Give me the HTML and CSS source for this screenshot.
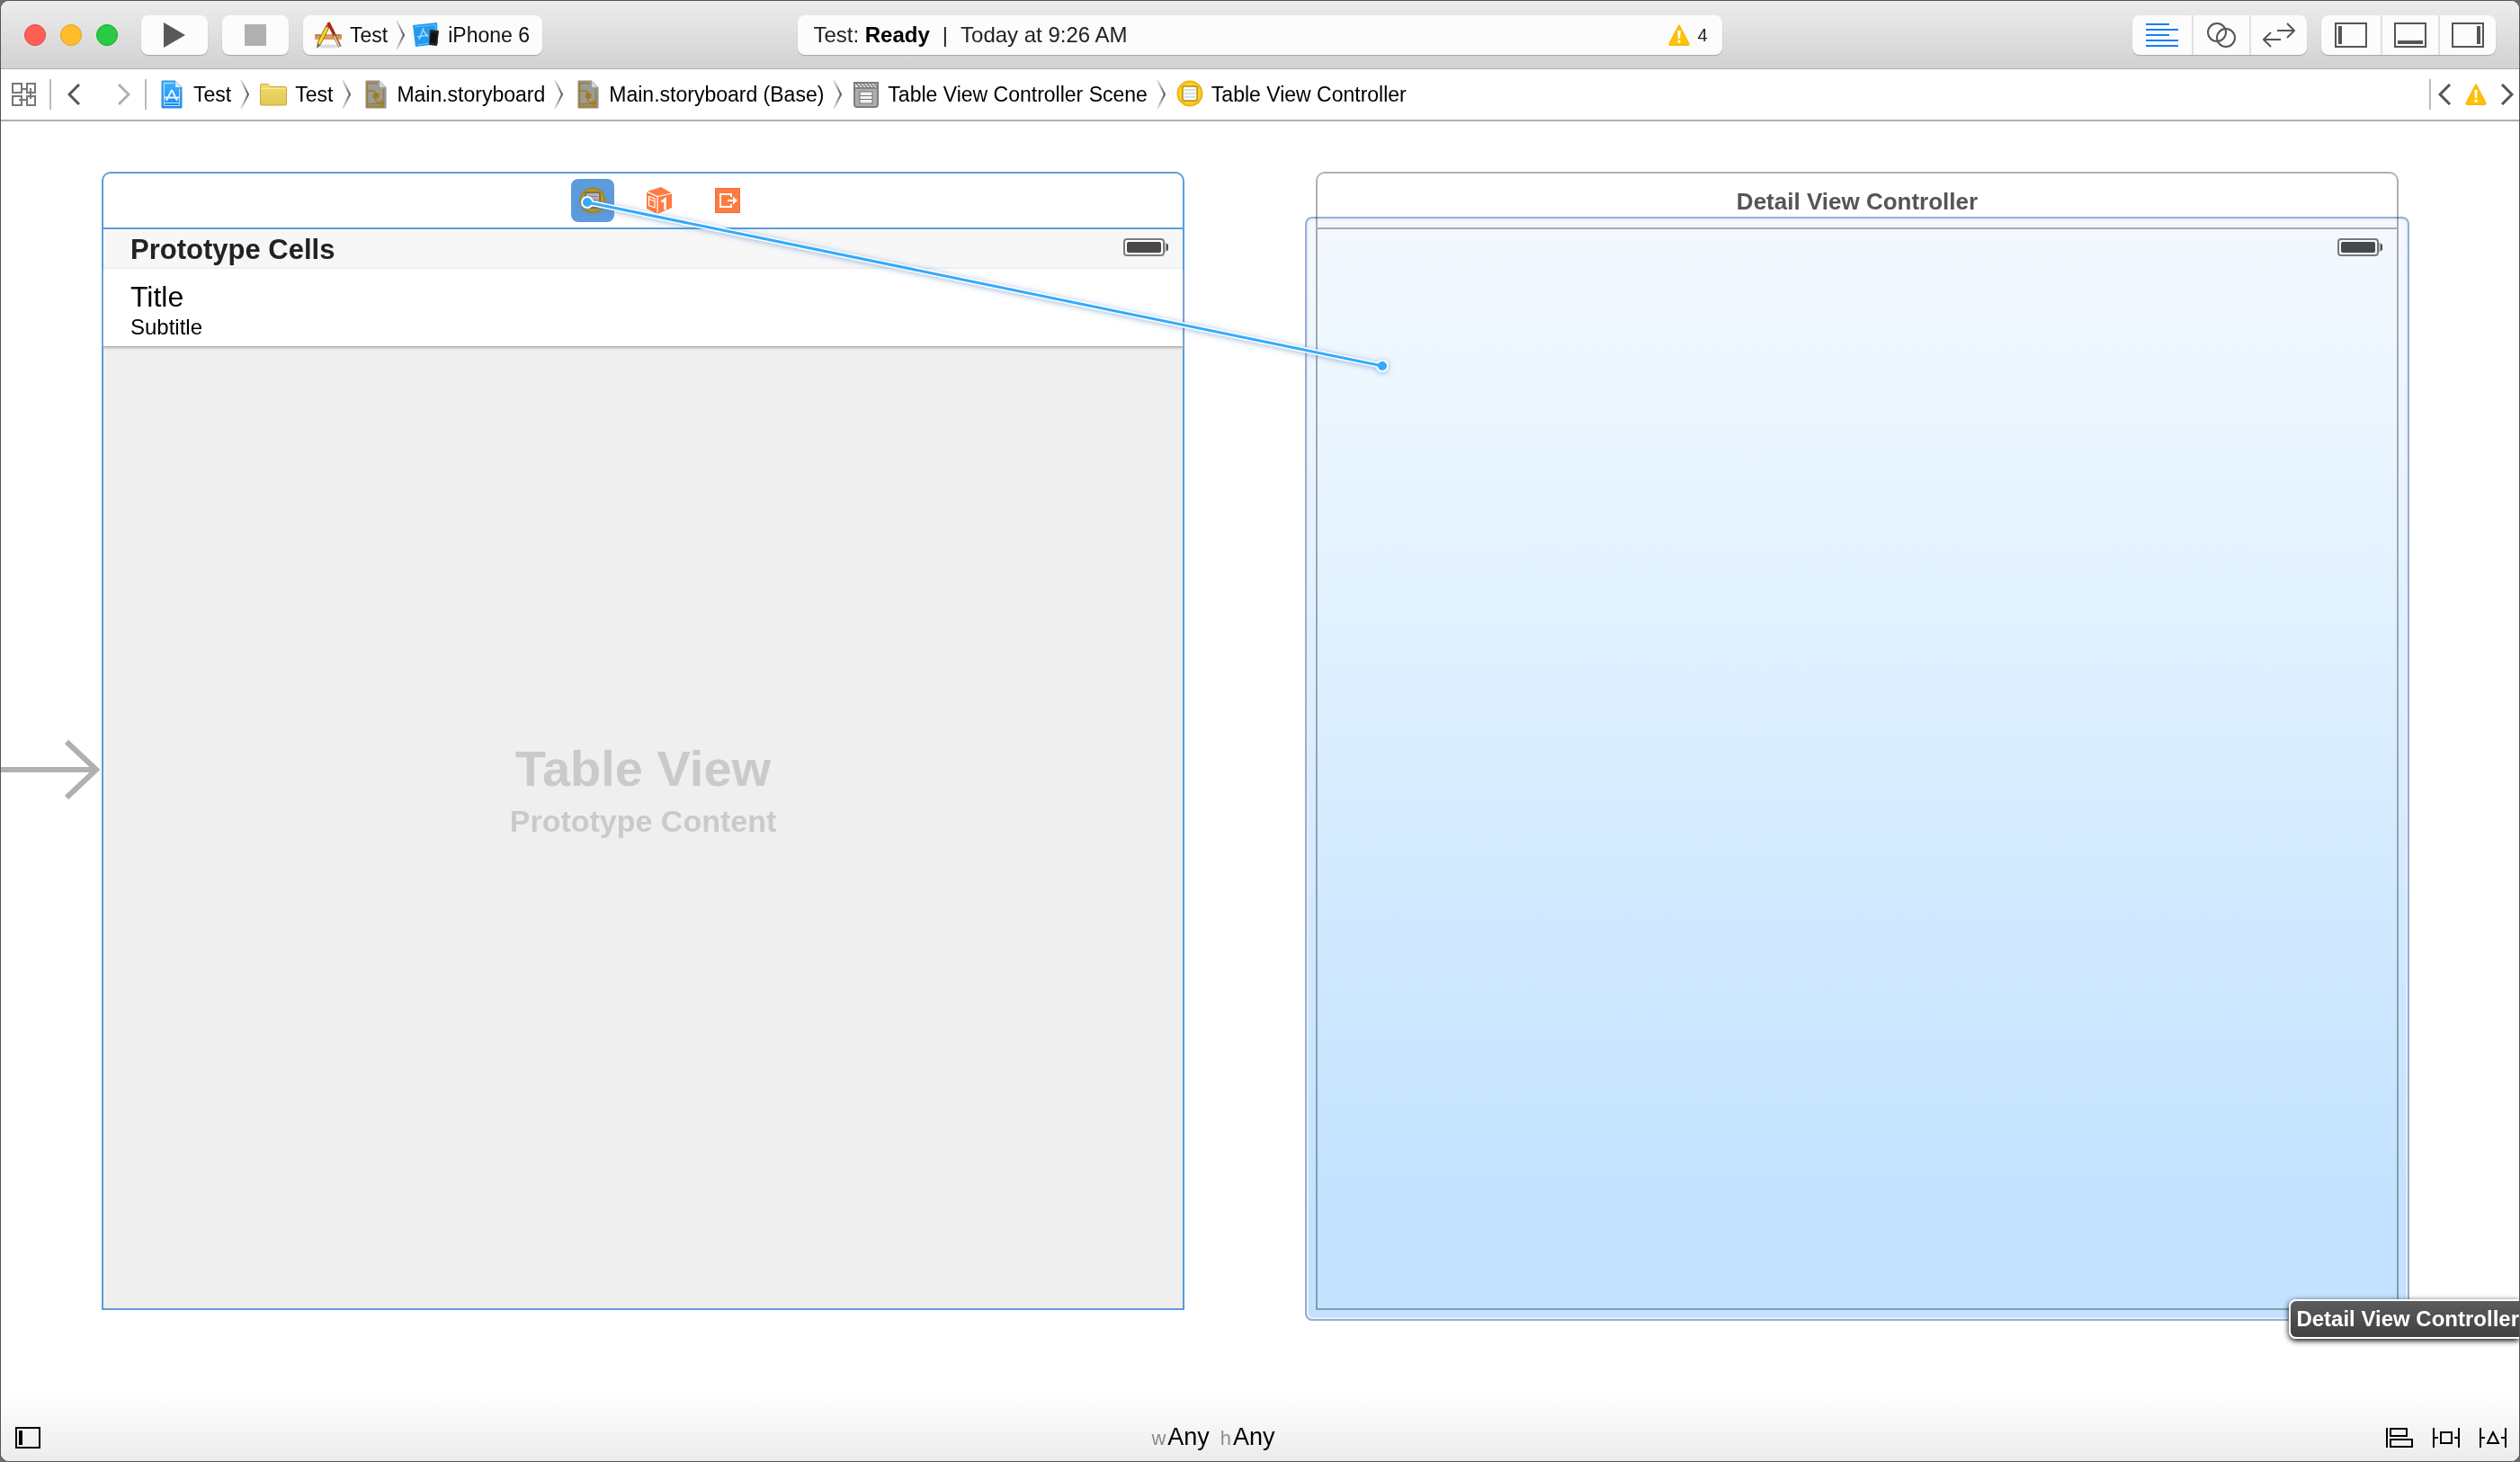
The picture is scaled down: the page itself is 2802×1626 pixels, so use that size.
FILE: index.html
```html
<!DOCTYPE html>
<html lang="en">
<head>
<meta charset="utf-8">
<title>Test — Main.storyboard</title>
<link rel="stylesheet" href="styles.css">
</head>
<body>
<svg class="defs" aria-hidden="true">
  <defs>
    <linearGradient id="fade" x1="0" y1="0" x2="0" y2="1">
      <stop offset="0" stop-color="#666" stop-opacity=".15"/><stop offset=".5" stop-color="#555"/><stop offset="1" stop-color="#666" stop-opacity=".15"/>
    </linearGradient>
    <linearGradient id="blue" x1="0" y1="0" x2="0" y2="1"><stop offset="0" stop-color="#3fb4f8"/><stop offset="1" stop-color="#1a86f7"/></linearGradient>
    <linearGradient id="manila" x1="0" y1="0" x2="0" y2="1"><stop offset="0" stop-color="#f0dc6e"/><stop offset="1" stop-color="#e2c653"/></linearGradient>
    <symbol id="sep" viewBox="0 0 10 34"><path d="M1 1L9 17L1 33" fill="none" stroke="url(#fade)" stroke-width="2"/></symbol>
    <symbol id="warn" viewBox="0 0 24 24"><path d="M12 1.500L22.500 21.500Q23 23 21.500 23H2.500Q1 23 1.500 21.500Z" fill="#ffc400" stroke="#fdb813" stroke-width="2" stroke-linejoin="round"/><path d="M10.200 7h3.600l-.8 9h-2z" fill="#fff"/><circle cx="12" cy="19.300" r="1.700" fill="#fff"/></symbol>
    <symbol id="board" viewBox="0 0 30 32"><path d="M5 1h15l7 7v23H5z" fill="#9b9b99" stroke="#8a8a8a"/><path d="M20 1v7h7z" fill="#d5d5d5"/><path d="M18 3.500H6.500v26h18V10M6.500 26.500h18M6.500 12h7q2 0 2 3v3M15.500 18v3q0 5 8 4.500M21 22.500l3 3l-3 3" fill="none" stroke="#a17c1c" stroke-width="1.400"/><circle cx="16" cy="17.500" r="3.500" fill="#a17c1c"/></symbol>
    <symbol id="battery" viewBox="0 0 50 20"><rect x="1" y="1" width="44" height="18" rx="3" fill="#fff" stroke="#7c7c7c" stroke-width="2"/><rect x="4" y="4" width="38" height="12" rx="2" fill="#4a4a4a"/><path d="M46 5h2v10h-2z" fill="#b5b5b5"/><path d="M48 6q2 0 2 2v4q0 2-2 2z" fill="#4a4a4a"/></symbol>
  </defs>
</svg>
<div class="window">
  <header class="toolbar">
    <div class="tools">
      <div class="lights">
        <button class="light close" aria-label="Close"></button>
        <button class="light minimise" aria-label="Minimise"></button>
        <button class="light full" aria-label="Full screen"></button>
      </div>
      <div class="run">
        <button class="tool" aria-label="Run"><svg width="24" height="28" viewBox="0 0 24 28"><path d="M0 0L24 14L0 28z" fill="#595959"/></svg></button>
        <button class="tool" aria-label="Stop"><svg width="24" height="24"><rect width="24" height="24" fill="#b0b0b0"/></svg></button>
        <div class="scheme">
          <button class="plain"><svg width="30" height="30" viewBox="0 0 30 30"><ellipse cx="15" cy="27.500" rx="13" ry="2" fill="#ddd"/><path d="M0 14h30v6H0z" fill="#dd9a58"/><path d="M2 14v3m3-3v2m3-2v3m3-2v-1m10 0v3m3-3v2m3-2v3" stroke="#a9662d"/><path d="M14.500 5L4.500 25" stroke="#6d541b" stroke-width="4.600"/><path d="M14.500 5L4.500 25" stroke="#f8d62c" stroke-width="3.200"/><path d="M2.800 24l3.800 2L2 30z" fill="#80643c"/><path d="M14 2.500l3 2-1.500 3-3.500-2z" fill="#e04460"/><path d="M15 1l7 14" stroke="#a62a12" stroke-width="3.600"/><path d="M21 14l7 14" stroke="#8b5a41" stroke-width="3.600"/><path d="M21.500 16l6 12" stroke="#efd4bd" stroke-width="1.600"/></svg>Test</button>
          <svg class="sep" width="10" height="34"><use href="#sep"/></svg>
          <button class="plain"><svg width="30" height="30" viewBox="0 0 30 30"><path d="M0 4L27 1L28 25L3 28z" fill="#209bf0"/><path d="M2 6L25 3.500L26 23L5 26" fill="none" stroke="#71c3fa"/><path d="M12 7L7 20M11 9l6 8M5 17l12-2" stroke="#9bd8ff" stroke-width="1.600"/><path d="M20 9l8 1q1 0 1 1l-2 15q0 1-1 1l-7-1q-1 0-1-1l1-15q0-1 1-1z" fill="#252525"/><path d="M20.500 12l6.500 1-1.500 11-6-1z" fill="#111"/></svg>iPhone 6</button>
        </div>
      </div>
    </div>
    <div class="status">
      <span>Test: <b>Ready</b></span><span class="bar">|</span><span>Today at 9:26 AM</span>
      <button class="plain issues"><svg width="24" height="24"><use href="#warn"/></svg>4</button>
    </div>
    <div class="views">
      <div class="segments">
        <button aria-label="Standard editor"><svg width="36" height="28" stroke="#157efb" stroke-width="2"><path d="M0 2h26M0 8h36M0 14h26M0 20h36M0 26h36"/></svg></button>
        <button aria-label="Assistant editor"><svg width="32" height="28" fill="none" stroke="#555" stroke-width="2"><circle cx="11" cy="11" r="10"/><circle cx="21" cy="17" r="10"/></svg></button>
        <button aria-label="Version editor"><svg width="36" height="28" fill="none" stroke="#555" stroke-width="2"><path d="M16 9h19M27 1l8 8-8 8M20 19H1M9 11l-8 8 8 8"/></svg></button>
      </div>
      <div class="segments">
        <button aria-label="Navigator"><svg width="36" height="28" fill="none" stroke="#555" stroke-width="2"><rect x="1" y="1" width="34" height="26"/><path d="M6 4v20" stroke-width="4"/></svg></button>
        <button aria-label="Debug area"><svg width="36" height="28" fill="none" stroke="#555" stroke-width="2"><rect x="1" y="1" width="34" height="26"/><path d="M4 22h28" stroke-width="4"/></svg></button>
        <button aria-label="Utilities"><svg width="36" height="28" fill="none" stroke="#555" stroke-width="2"><rect x="1" y="1" width="34" height="26"/><path d="M30 4v20" stroke-width="4"/></svg></button>
      </div>
    </div>
  </header>

  <nav class="jumpbar" aria-label="Jump bar">
    <button class="plain related" aria-label="Related items"><svg width="28" height="26" viewBox="0 0 28 26" fill="none" stroke="#777" stroke-width="2"><path d="M1 1h10v10H1zM17 1h9v10h-9zM1 15h10v10H1zM17 15h9v10h-9zM11 7h4M21 6v12M8 19h9M13 7h4"/></svg></button>
    <span class="rule"></span>
    <button class="plain back" aria-label="Back"><svg width="14" height="24" fill="none" stroke="#555" stroke-width="3"><path d="M13 1L2 12l11 11"/></svg></button>
    <button class="plain forward" aria-label="Forward"><svg width="14" height="24" fill="none" stroke="#b0b0b0" stroke-width="3"><path d="M1 1l11 11L1 23"/></svg></button>
    <span class="rule"></span>
    <div class="crumbs">
      <a href="#project"><svg width="30" height="32" viewBox="0 0 30 32"><path d="M4 1h15l7 7v23H4z" fill="url(#blue)" stroke="#3b8fd8"/><path d="M19 1v7h7z" fill="#e8e8e8"/><path d="M17 3.500H6.500v25h17V10M6.500 25.500h17" fill="none" stroke="#bfe3ff"/><path d="M15 11L9 23M15 11l6 12M7 19.500h16" stroke="#e4f5ff" stroke-width="2"/></svg>Test</a>
      <svg class="sep" width="10" height="34"><use href="#sep"/></svg>
      <a href="#group"><svg width="30" height="32" viewBox="0 0 30 32"><path d="M.5 27V6q0-1.500 1.500-1.500h7l2.500 3H28q1.500 0 1.500 1.500v18q0 1-1 1H1.500q-1 0-1-1z" fill="url(#manila)" stroke="#c9a93c"/><path d="M1 9.500h28" stroke="#f9ea8e"/></svg>Test</a>
      <svg class="sep" width="10" height="34"><use href="#sep"/></svg>
      <a href="#file"><svg width="30" height="32"><use href="#board"/></svg>Main.storyboard</a>
      <svg class="sep" width="10" height="34"><use href="#sep"/></svg>
      <a href="#base"><svg width="30" height="32"><use href="#board"/></svg>Main.storyboard (Base)</a>
      <svg class="sep" width="10" height="34"><use href="#sep"/></svg>
      <a href="#scene"><svg width="30" height="32" viewBox="0 0 30 32"><path d="M2 3h26v24q0 3-3 3H5q-3 0-3-3z" fill="#adadad" stroke="#7d7d7d" stroke-width="2"/><path d="M3 4h24v4H3z" fill="#e8e8e8"/><path d="M4 4l4 4m0-4l4 4m0-4l4 4m0-4l4 4m0-4l4 4m0-4l3 3M2 9h26" stroke="#777" stroke-width="1.500"/><rect x="8" y="13" width="14" height="13" fill="#f2f2f2" stroke="#777"/><path d="M8 17.500h14M8 21.500h14" stroke="#777"/></svg>Table View Controller Scene</a>
      <svg class="sep" width="10" height="34"><use href="#sep"/></svg>
      <a href="#controller"><svg width="30" height="32" viewBox="0 0 30 32"><circle cx="15" cy="15" r="13.500" fill="#ffd11a" stroke="#e9b41a" stroke-width="2"/><rect x="7" y="7" width="16" height="16" rx="2" fill="#fff" stroke="#a88a2c" stroke-width="1.500"/><path d="M9 11h12M9 15h12M9 19h12" stroke="#b9b9b9"/></svg>Table View Controller</a>
    </div>
    <div class="issue-nav">
      <span class="rule"></span>
      <button class="plain" aria-label="Previous issue"><svg width="14" height="24" fill="none" stroke="#555" stroke-width="3"><path d="M13 1L2 12l11 11"/></svg></button>
      <button class="plain" aria-label="Issues"><svg width="24" height="24"><use href="#warn"/></svg></button>
      <button class="plain" aria-label="Next issue"><svg width="14" height="24" fill="none" stroke="#555" stroke-width="3"><path d="M1 1l11 11L1 23"/></svg></button>
    </div>
  </nav>

  <main class="canvas">
    <section class="scene selected">
      <div class="dock">
        <button class="dock-item active" aria-label="Table View Controller"><svg width="30" height="30" viewBox="0 0 30 30"><circle cx="15" cy="15" r="13.500" fill="#b89b33" stroke="#aa8416" stroke-width="2"/><rect x="7" y="6" width="16" height="17" rx="2" fill="#b5b5b5" stroke="#6e6331" stroke-width="1.500"/><path d="M9 10.500h12M9 14.500h12M9 18.500h12" stroke="#8a8a8a"/></svg></button>
        <button class="dock-item" aria-label="First Responder"><svg width="30" height="30" viewBox="0 0 30 30"><path d="M0 5L16 0l12 7v16l-16 7L0 24z" fill="#ff7b42"/><path d="M0 5l12 5.500L28 7M12 10.500V30" fill="none" stroke="#fff" stroke-width="1.200"/><path d="M2.500 10.500l6.500 2.500v10l-6.500-2.500zM2.500 13.500l6.500 2.500" fill="none" stroke="#fff" stroke-width="1.200"/><path d="M16.500 16.500l4-3v12" fill="none" stroke="#fff" stroke-width="2.600"/></svg></button>
        <button class="dock-item" aria-label="Exit"><svg width="28" height="28" viewBox="0 0 28 28"><path d="M0 0h28v28H0z" fill="#ff7b42"/><path d="M.5.5h27v27H.500z" fill="none" stroke="#e8703c"/><path d="M18 10V7H6v14h12v-3M14 14h8" fill="none" stroke="#fff" stroke-width="2"/><path d="M20 9.500l5 4.500-5 4.500z" fill="#fff"/></svg></button>
      </div>
      <div class="view table-view">
        <div class="section-head"><h2>Prototype Cells</h2><svg width="50" height="20"><use href="#battery"/></svg></div>
        <div class="cell"><div class="cell-title">Title</div><div class="cell-sub">Subtitle</div></div>
        <div class="placeholder"><div class="big">Table View</div><div class="small">Prototype Content</div></div>
      </div>
    </section>
    <section class="scene">
      <h2 class="dock caption">Detail View Controller</h2>
      <div class="view">
        <div class="status-line"><svg width="50" height="20"><use href="#battery"/></svg></div>
        <div class="drop-target"></div>
      </div>
    </section>
    <svg class="overlay" aria-hidden="true">
      <defs><filter id="glow" x="-5%" y="-20%" width="110%" height="140%"><feDropShadow dx="0" dy="1" stdDeviation="3" flood-color="#3f76b5" flood-opacity=".55"/></filter></defs>
      <path d="M0 721H104M73 690l33 31-33 31" fill="none" stroke="#b0b0b0" stroke-width="6"/>
      <g filter="url(#glow)"><path d="M652 90L1536 272" stroke="#fff" stroke-width="6"/><circle cx="652" cy="90" r="7" fill="#fff"/><circle cx="1536" cy="272" r="7" fill="#fff"/></g>
      <path d="M652 90L1536 272" stroke="#33aaff" stroke-width="3"/><circle cx="652" cy="90" r="5" fill="#33aaff"/><circle cx="1536" cy="272" r="5" fill="#33aaff"/>
    </svg>
    <div class="tooltip" role="tooltip">Detail View Controller</div>
  </main>

  <footer class="bottombar">
    <button class="plain" aria-label="Document outline"><svg width="28" height="24" fill="none" stroke="#000" stroke-width="2"><rect x="1" y="1" width="26" height="22"/><path d="M6 4v16" stroke-width="4"/></svg></button>
    <button class="plain size"><small>w</small><span>Any</span><small class="second">h</small><span>Any</span></button>
    <div class="layout-tools">
      <button class="plain" aria-label="Align"><svg width="30" height="22" fill="none" stroke="#000" stroke-width="2"><path d="M1 0v22M5 1h18v8H5zM5 13h24v8H5z"/></svg></button>
      <button class="plain" aria-label="Pin"><svg width="30" height="22" fill="none" stroke="#000" stroke-width="2"><path d="M1 0v22M29 0v22M1 11h5M24 11h5M9 5h12v12H9z"/></svg></button>
      <button class="plain" aria-label="Resolve"><svg width="30" height="22" fill="none" stroke="#000" stroke-width="2"><path d="M1 0v22M29 0v22M1 11h5M24 11h5M15 5l6 12H9z"/></svg></button>
    </div>
  </footer>
</div>
</body>
</html>
```
FILE: styles.css
```css
* { box-sizing: border-box; }
body {
  margin: 0;
  background: #6b6b6b;
  font: 23px/28px "Liberation Sans", Arial, sans-serif;
  color: #000;
}
h2 { margin: 0; }
svg { display: block; flex: none; }
.defs { position: absolute; width: 0; height: 0; }
button { margin: 0; border: 0; padding: 0; font: inherit; color: inherit; background: none; }
.plain { display: flex; align-items: center; white-space: nowrap; }

.window {
  display: flex;
  flex-direction: column;
  min-height: 100vh;
  border: 1px solid #555;
  border-radius: 10px;
  background: #fff;
  overflow: hidden;
}

/* Toolbar */
.toolbar {
  display: grid;
  grid-template-columns: 63fr 73fr 63fr;
  align-items: center;
  height: 76px;
  border-bottom: 1px solid #b0b0b0;
  background: linear-gradient(#ececec, #d2d2d2);
}
.tools { display: flex; align-items: center; gap: 26px; padding-left: 26px; }
.lights { display: flex; gap: 16px; }
.light { width: 24px; height: 24px; border: 1px solid; border-radius: 50%; }
.close { background: #ff5f57; border-color: #e2463f; }
.minimise { background: #ffbd2e; border-color: #e1a116; }
.full { background: #28cb41; border-color: #12ac28; }
.run { display: flex; gap: 16px; }
.tool, .scheme, .status, .segments {
  display: flex;
  align-items: center;
  height: 44px;
  border-radius: 8px;
  background: #fcfcfc;
  box-shadow: 0 1px 1px #a6a6a6;
}
.tool { justify-content: center; width: 74px; }
.scheme { gap: 9px; padding: 0 14px 0 13px; color: #111; }
.scheme .plain { gap: 9px; }
.status { padding: 0 16px 0 17px; color: #222; font-size: 24px; }
.status b { color: #000; }
.bar { margin: 0 14px; }
.issues { gap: 8px; margin-left: auto; font-size: 20px; }
.views { display: flex; justify-content: flex-end; gap: 16px; padding-right: 26px; }
.segments { overflow: hidden; }
.segments button { display: flex; align-items: center; justify-content: center; width: 64px; height: 44px; }
.segments button:first-child { width: 66px; }
.segments button + button { border-left: 2px solid #e0e0e0; }

/* Jump bar */
.jumpbar {
  display: flex;
  align-items: center;
  height: 58px;
  border-bottom: 2px solid #b0b0b0;
  background: #fff;
}
.rule { width: 2px; height: 34px; background: #bbb; }
.related { padding: 0 14px 0 12px; }
.back { padding: 0 42px 0 18px; }
.forward { padding-right: 16px; }
.crumbs { display: flex; align-items: center; gap: 12px; padding-left: 13px; }
.crumbs a { display: flex; align-items: center; gap: 9px; color: inherit; text-decoration: none; white-space: nowrap; }
.crumbs .sep { margin-left: -2px; }
.issue-nav { display: flex; align-items: center; gap: 16px; margin-left: auto; padding-right: 6px; }
.issue-nav .rule { margin-right: -8px; }

/* Canvas */
.canvas {
  position: relative;
  display: flex;
  flex: 1;
  align-items: flex-start;
  gap: 146px;
  padding: 56px 134px 0 112px;
  overflow: hidden;
}
.scene { flex: 1; --edge: #b0b0b0; }
.selected { --edge: #5c9ddb; }
.dock {
  display: flex;
  align-items: center;
  justify-content: center;
  gap: 27px;
  height: 62px;
  border: 2px solid var(--edge);
  border-bottom: 0;
  border-radius: 10px 10px 0 0;
}
.selected .dock { padding-left: 38px; }
.dock-item { display: flex; align-items: center; justify-content: center; width: 48px; height: 48px; border-radius: 8px; }
.active { background: #5c9bdc; }
.caption { padding-top: 2px; font-size: 26px; line-height: 32px; color: #555; }
.view {
  position: relative;
  display: flex;
  flex-direction: column;
  aspect-ratio: 1;
  border: 2px solid var(--edge);
}
.table-view { background: #efefef; }
.section-head {
  display: flex;
  align-items: center;
  justify-content: space-between;
  height: 44px;
  padding: 0 16px 0 30px;
  background: #f7f7f7;
}
.section-head h2 { padding-top: 2px; font-size: 31px; line-height: 44px; color: #222; }
.section-head svg { margin-bottom: 4px; }
.cell { height: 87px; padding: 12px 30px 0; background: #fff; border-bottom: 1px solid #b0b0b0; box-shadow: 0 1px 3px #b5b5b5; }
.cell-title { font-size: 32px; line-height: 38px; }
.cell-sub { font-size: 24px; line-height: 30px; }
.placeholder {
  display: flex;
  flex: 1;
  flex-direction: column;
  align-items: center;
  justify-content: center;
  gap: 4px;
  padding-bottom: 84px;
  color: #cacaca;
  font-weight: bold;
}
.big { font-size: 56px; line-height: 64px; }
.small { font-size: 34px; line-height: 44px; }
.status-line { display: flex; justify-content: flex-end; padding: 10px 16px; }
.drop-target {
  position: absolute;
  inset: -14px;
  border: 2px solid #94aedb;
  border-radius: 8px;
  background: linear-gradient(#f4f8ff, #edf7ff 14%, #c2e2ff 90%);
  box-shadow: inset 0 0 0 2px #ececf2;
  mix-blend-mode: multiply;
}
.overlay { position: absolute; inset: 0; width: 100%; height: 100%; pointer-events: none; }
.tooltip {
  position: absolute;
  top: 1310px;
  right: 0;
  padding: 6px 0 6px 6px;
  border: 2px solid #fff;
  border-right: 0;
  border-radius: 8px 0 0 8px;
  background: linear-gradient(#5c5c5c, #404040);
  box-shadow: 0 2px 6px #000;
  color: #fff;
  font-size: 24px;
  font-weight: bold;
  white-space: nowrap;
}

/* Bottom bar */
.bottombar {
  display: flex;
  align-items: center;
  justify-content: space-between;
  height: 74px;
  padding: 22px 14px 0 16px;
  background: linear-gradient(#fff, #ececec);
}
.size { align-items: baseline; gap: 2px; font-size: 27px; line-height: 32px; }
.size small { font-size: 22px; color: #8c8c8c; }
.second { margin-left: 10px; }
.layout-tools { display: flex; justify-content: flex-end; gap: 22px; }
```
